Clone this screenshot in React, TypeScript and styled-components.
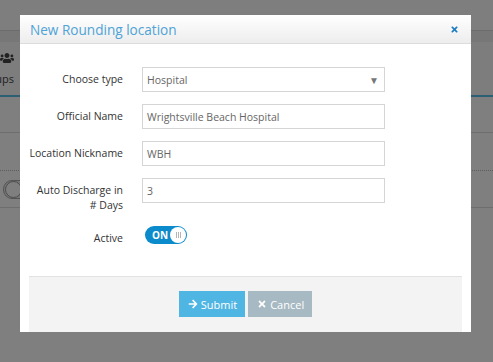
import React from "react";
import styled, { createGlobalStyle } from "styled-components";
import { FaArrowRight, FaTimes, FaUsers } from "react-icons/fa";

const GlobalStyle = createGlobalStyle`
  html, body {
    margin: 0;
    padding: 0;
    background: #fff;
    font-family: "Open Sans", "Liberation Sans", sans-serif;
  }
`;

const Page = styled.div`
  position: relative;
  width: 493px;
  height: 362px;
  overflow: hidden;
  background: #fff;
`;

const TopBar = styled.div`
  height: 30px;
  background: #fdfdfd;
  border-bottom: 1px solid #d8d8d8;
`;

const SubBar = styled.div`
  height: 11px;
  background: #eeeeee;
`;

const Tabs = styled.div`
  display: flex;
  height: 53px;
  border-bottom: 2px solid #58bde9;
  background: #fafafa;
`;

const Tab = styled.div`
  display: flex;
  flex-direction: column;
  align-items: flex-end;
  justify-content: center;
  gap: 6px;
  width: 14px;
  overflow: hidden;
  color: #444;
  font-size: 11px;
  white-space: nowrap;
`;

const ListRow = styled.div<{ $h: number; $dotted?: boolean }>`
  display: flex;
  align-items: center;
  height: ${(p) => p.$h}px;
  border-bottom: 1px ${(p) => (p.$dotted ? "dotted #bbb" : "solid #ddd")};
  padding-left: 3px;
`;

const MiniSwitch = styled.div`
  width: 40px;
  height: 17px;
  border-radius: 9px;
  border: 1px solid #aaa;
  background: #ececec;
  display: flex;
  align-items: center;
`;

const MiniKnob = styled.div`
  width: 15px;
  height: 15px;
  border-radius: 50%;
  background: #fff;
  border: 1px solid #999;
  margin-left: 1px;
`;

const Backdrop = styled.div`
  position: absolute;
  inset: 0;
  background: rgba(0, 0, 0, 0.5);
`;

const Modal = styled.div`
  position: absolute;
  top: 15px;
  left: 20px;
  width: 451px;
  height: 317px;
  background: #fff;
  display: flex;
  flex-direction: column;
`;

const Header = styled.div`
  display: flex;
  align-items: center;
  justify-content: space-between;
  height: 28px;
  padding: 0 12px 0 10px;
  background: linear-gradient(#ffffff, #ededed);
  border-bottom: 1px solid #dcdcdc;
`;

const Title = styled.h4`
  margin: 0;
  font-size: 13.6px;
  font-weight: 400;
  color: #4fa3d6;
`;

const Close = styled.span`
  display: flex;
  color: #1e7cc3;
  font-size: 9px;
`;

const Content = styled.div`
  flex: 1;
  display: flex;
  flex-direction: column;
  padding: 0 9px;
`;

const Form = styled.div`
  display: flex;
  flex-direction: column;
  gap: 12px;
  padding: 23px 0 30px;
`;

const Row = styled.div<{ $top?: boolean }>`
  display: grid;
  grid-template-columns: 94px 243px;
  column-gap: 19px;
  align-items: ${(p) => (p.$top ? "start" : "center")};
`;

const Label = styled.label<{ $pad?: number; $wrap?: boolean }>`
  text-align: right;
  font-size: 10.5px;
  line-height: 15px;
  color: #333;
  white-space: ${(p) => (p.$wrap ? "normal" : "nowrap")};
  padding-top: ${(p) => p.$pad ?? 0}px;
`;

const Field = styled.div`
  position: relative;
  box-sizing: border-box;
  height: 25px;
  display: flex;
  align-items: center;
  padding: 0 8px 0 4px;
  border: 1px solid #d5d5d5;
  font-size: 10.5px;
  color: #666;
  background: #fff;
`;

const Caret = styled.span`
  position: absolute;
  right: 5px;
  top: 5px;
  font-size: 10px;
  color: #777;
`;

const Switch = styled.div`
  box-sizing: border-box;
  width: 42px;
  height: 18px;
  margin: 1px 0 0 3px;
  border-radius: 9px;
  background: #0b8bcc;
  display: flex;
  align-items: center;
  justify-content: space-between;
  padding: 0 1px 0 7px;
  color: #fff;
  font-size: 10px;
  font-weight: 700;
`;

const Knob = styled.div`
  box-sizing: border-box;
  width: 16px;
  height: 16px;
  border-radius: 50%;
  background: #fff;
  display: flex;
  align-items: center;
  justify-content: center;
  gap: 1px;
`;

const Bar = styled.span`
  width: 1px;
  height: 6px;
  background: #b5b5b5;
`;

const Footer = styled.div`
  flex: 1;
  display: flex;
  justify-content: center;
  align-items: flex-start;
  gap: 3px;
  padding-top: 14px;
  background: #f3f3f3;
  border-top: 1px solid #e2e2e2;
`;

const Button = styled.button<{ $bg: string }>`
  display: flex;
  align-items: center;
  gap: 3px;
  height: 26px;
  padding: 0 8px 0 9px;
  border: none;
  background: ${(p) => p.$bg};
  color: #fff;
  font-family: "Open Sans", "Liberation Sans", sans-serif;
  font-size: 11px;
  cursor: pointer;
  svg {
    font-size: 10px;
  }
`;

export default function App() {
  return (
    <Page>
      <GlobalStyle />
      <TopBar />
      <SubBar />
      <Tabs>
        <Tab>
          <FaUsers size={14} />
          <span>Groups</span>
        </Tab>
      </Tabs>
      <ListRow $h={35} />
      <ListRow $h={37} $dotted />
      <ListRow $h={36}>
        <MiniSwitch>
          <MiniKnob />
        </MiniSwitch>
      </ListRow>
      <Backdrop />
      <Modal>
        <Header>
          <Title>New Rounding location</Title>
          <Close>
            <FaTimes />
          </Close>
        </Header>
        <Content>
          <Form>
            <Row>
              <Label>Choose type</Label>
              <Field>
                Hospital
                <Caret>▼</Caret>
              </Field>
            </Row>
            <Row>
              <Label>Official Name</Label>
              <Field>Wrightsville Beach Hospital</Field>
            </Row>
            <Row>
              <Label>Location Nickname</Label>
              <Field>WBH</Field>
            </Row>
            <Row $top>
              <Label $pad={5} $wrap>
                Auto Discharge in # Days
              </Label>
              <Field>3</Field>
            </Row>
            <Row $top>
              <Label $pad={6}>Active</Label>
              <Switch>
                ON
                <Knob>
                  <Bar />
                  <Bar />
                  <Bar />
                </Knob>
              </Switch>
            </Row>
          </Form>
          <Footer>
            <Button $bg="#4fb6e3">
              <FaArrowRight />
              Submit
            </Button>
            <Button $bg="#a7b9c2">
              <FaTimes />
              Cancel
            </Button>
          </Footer>
        </Content>
      </Modal>
    </Page>
  );
}
